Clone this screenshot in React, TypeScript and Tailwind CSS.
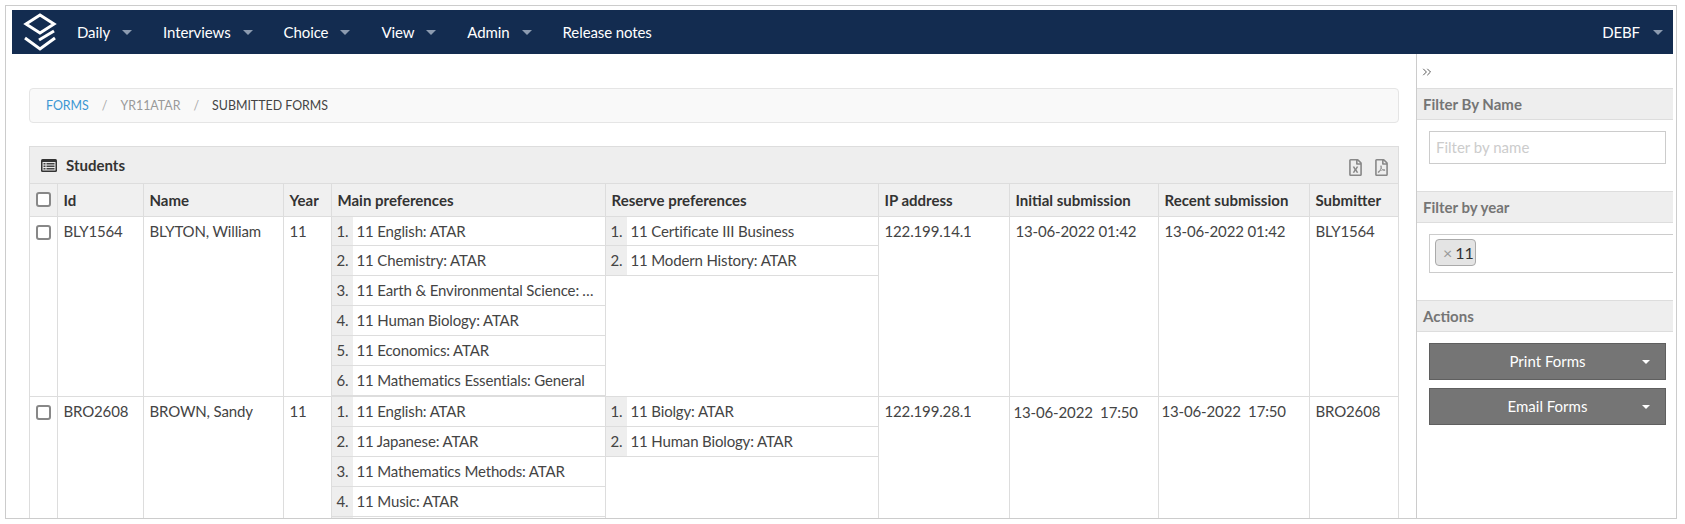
import { FaRegFileExcel, FaRegFilePdf } from "react-icons/fa";
import { ChevronsRight } from "lucide-react";

const navItems = [
  { label: "Daily", caret: true },
  { label: "Interviews", caret: true },
  { label: "Choice", caret: true },
  { label: "View", caret: true },
  { label: "Admin", caret: true },
  { label: "Release notes", caret: false },
];

function Caret() {
  return <span className="inline-block w-0 h-0 border-x-[5px] border-x-transparent border-t-[5px] border-t-[#8c9bb0]" />;
}

function Logo() {
  return (
    <svg width="34" height="38" viewBox="0 0 34 38" fill="none" stroke="white" strokeWidth="3">
      <path d="M17 2 L31 11 L17 20 L3 11 Z" />
      <path d="M2 25 L17 36 L32 25" />
      <path d="M16 27 L31 18" />
    </svg>
  );
}

function ListIcon() {
  return (
    <svg width="16" height="13" viewBox="0 0 16 13">
      <rect x="0" y="0" width="16" height="13" rx="1.5" fill="#333333" />
      <rect x="1.5" y="3" width="13" height="8.5" fill="#e8e8e8" />
      <rect x="2.5" y="4" width="2" height="1.5" fill="#444444" />
      <rect x="5.5" y="4" width="8" height="1.5" fill="#444444" />
      <rect x="2.5" y="6.5" width="2" height="1.5" fill="#444444" />
      <rect x="5.5" y="6.5" width="8" height="1.5" fill="#444444" />
      <rect x="2.5" y="9" width="2" height="1.5" fill="#444444" />
      <rect x="5.5" y="9" width="8" height="1.5" fill="#444444" />
    </svg>
  );
}

function Check() {
  return <span className="block w-[15px] h-[15px] border-2 border-[#888888] rounded-[3px] bg-white" />;
}

function PrefList({ items, shortFirst }: { items: string[]; shortFirst?: boolean }) {
  return (
    <div className="w-full">
      {items.map((t, i) => (
        <div key={i} className={i === 0 && shortFirst ? "flex h-[29px] border-b border-[#ddd]" : "flex h-[30px] border-b border-[#ddd]"}>
          <div className="w-[21px] shrink-0 bg-[#eeeeee] pl-[5px] leading-[28px]">{i + 1}.</div>
          <div className="flex-1 pl-[4px] pr-[8px] leading-[28px] truncate min-w-0">{t}</div>
        </div>
      ))}
    </div>
  );
}

function Th({ children }: { children?: React.ReactNode }) {
  return <th className="border-r border-[#ddd] last:border-r-0 px-[6px] text-left font-bold text-[#333] align-middle">{children}</th>;
}

const tdClass = "border-r border-[#ddd] last:border-r-0 px-[6px] pt-[3px] align-top";

function SideHead({ children }: { children: React.ReactNode }) {
  return (
    <div className="h-[32px] bg-[#eeeeee] border-y border-[#dddddd] pl-[6px] font-bold text-[#757575] leading-[30px]">
      {children}
    </div>
  );
}

function ActionButton({ label }: { label: string }) {
  return (
    <button className="relative w-[237px] h-[37px] bg-[#757575] border border-[#5f5f5f] text-white text-center">
      {label}
      <span className="absolute right-[15px] top-[16px] w-0 h-0 border-x-[4px] border-x-transparent border-t-[4px] border-t-white" />
    </button>
  );
}

export default function App() {
  return (
    <div className="h-[524px] w-full bg-white pl-[5px] pt-[5px] overflow-hidden font-['Lato',sans-serif] text-[15px] text-[#444]">
      <div className="w-[1672px] h-[514px] border border-[#cccccc] pl-[6px] pr-[3px] pt-[4px] flex flex-col overflow-hidden">
        <nav className="h-[44px] shrink-0 bg-[#132c50] flex items-center text-white text-[15px] tracking-[-0.1px]">
          <div className="w-[65px] pl-[11px] flex items-center">
            <Logo />
          </div>
          <div className="flex items-center gap-[31px]">
            {navItems.map((n) => (
              <div key={n.label} className="flex items-center gap-[12px]">
                <span>{n.label}</span>
                {n.caret && <Caret />}
              </div>
            ))}
          </div>
          <div className="ml-auto flex items-center gap-[13px] pr-[10px]">
            <span>DEBF</span>
            <Caret />
          </div>
        </nav>

        <div className="flex-1 flex min-h-0">
          <main className="flex-1 min-w-0 pl-[17px] pr-[17px] pt-[34px] overflow-hidden">
            <div className="h-[35px] bg-[#f9f9f9] border border-[#e5e5e5] rounded-[4px] flex items-center pl-[16px] pt-[2px] text-[12.4px] uppercase">
              <span className="text-[#3b97d3]">Forms</span>
              <span className="text-[#aaa] px-[13px]">/</span>
              <span className="text-[#999]">YR11ATAR</span>
              <span className="text-[#aaa] px-[13px]">/</span>
              <span className="text-[#444]">Submitted Forms</span>
            </div>

            <section className="mt-[23px] border-x border-t border-[#dddddd]">
              <div className="h-[37px] bg-[#eeeeee] border-b border-[#dddddd] flex items-center pl-[11px] pr-[8px]">
                <ListIcon />
                <span className="ml-[9px] font-bold text-[#333]">Students</span>
                <div className="ml-auto flex items-center gap-[9px] text-[#888888] text-[17px] pt-[4px]">
                  <FaRegFileExcel />
                  <FaRegFilePdf />
                </div>
              </div>
              <table className="table-fixed w-full border-collapse">
                <colgroup>
                  <col className="w-[27px]" />
                  <col className="w-[86px]" />
                  <col className="w-[140px]" />
                  <col className="w-[48px]" />
                  <col className="w-[274px]" />
                  <col className="w-[273px]" />
                  <col className="w-[131px]" />
                  <col className="w-[149px]" />
                  <col className="w-[151px]" />
                  <col />
                </colgroup>
                <thead>
                  <tr className="h-[32px] bg-[#f0f0f0] border-b border-[#dddddd]">
                    <th className="border-r border-[#ddd] pl-[6px]"><Check /></th>
                    <Th>Id</Th>
                    <Th>Name</Th>
                    <Th>Year</Th>
                    <Th>Main preferences</Th>
                    <Th>Reserve preferences</Th>
                    <Th>IP address</Th>
                    <Th>Initial submission</Th>
                    <Th>Recent submission</Th>
                    <Th>Submitter</Th>
                  </tr>
                </thead>
                <tbody className="tracking-[-0.15px]">
                  <tr className="border-b border-[#dddddd]">
                    <td className="border-r border-[#ddd] pl-[6px] pt-[8px] align-top"><Check /></td>
                    <td className={tdClass}>BLY1564</td>
                    <td className={tdClass}>BLYTON, William</td>
                    <td className={tdClass}>11</td>
                    <td className="border-r border-[#ddd] align-top p-0">
                      <PrefList shortFirst items={["11 English: ATAR", "11 Chemistry: ATAR", "11 Earth & Environmental Science: ATAR", "11 Human Biology: ATAR", "11 Economics: ATAR", "11 Mathematics Essentials: General"]} />
                    </td>
                    <td className="border-r border-[#ddd] align-top p-0">
                      <PrefList shortFirst items={["11 Certificate III Business", "11 Modern History: ATAR"]} />
                    </td>
                    <td className={tdClass}><div className="overflow-hidden whitespace-nowrap w-[86px]">122.199.14.1</div></td>
                    <td className={tdClass}>13-06-2022 01:42</td>
                    <td className={tdClass}>13-06-2022 01:42</td>
                    <td className={tdClass}>BLY1564</td>
                  </tr>
                  <tr>
                    <td className="border-r border-[#ddd] pl-[6px] pt-[8px] align-top"><Check /></td>
                    <td className={tdClass}>BRO2608</td>
                    <td className={tdClass}>BROWN, Sandy</td>
                    <td className={tdClass}>11</td>
                    <td className="border-r border-[#ddd] align-top p-0">
                      <PrefList items={["11 English: ATAR", "11 Japanese: ATAR", "11 Mathematics Methods: ATAR", "11 Music: ATAR", "\u00a0"]} />
                    </td>
                    <td className="border-r border-[#ddd] align-top p-0">
                      <PrefList items={["11 Biolgy: ATAR", "11 Human Biology: ATAR"]} />
                    </td>
                    <td className={tdClass}><div className="overflow-hidden whitespace-nowrap w-[86px]">122.199.28.144</div></td>
                    <td className={tdClass}><span className="block -ml-[2px] mt-[1px] whitespace-pre">13-06-2022  17:50</span></td>
                    <td className={tdClass}><span className="relative block -ml-[3px] bg-white whitespace-pre">13-06-2022  17:50</span></td>
                    <td className={tdClass}>BRO2608</td>
                  </tr>
                </tbody>
              </table>
            </section>
          </main>

          <aside className="w-[257px] shrink-0 border-l border-[#cccccc] overflow-hidden">
            <div className="h-[34px] pl-[3px] pt-[2px] flex items-center text-[#444]">
              <ChevronsRight size={14} strokeWidth={1.5} />
            </div>
            <SideHead>Filter By Name</SideHead>
            <div className="h-[71px] pl-[12px] pt-[11px]">
              <input className="w-[237px] h-[33px] border border-[#cccccc] px-[6px] pb-[2px] outline-none placeholder:text-[#cccccc]" placeholder="Filter by name" />
            </div>
            <SideHead>Filter by year</SideHead>
            <div className="h-[77px] pl-[12px] pt-[11px]">
              <div className="h-[39px] w-[260px] border border-[#cccccc] pl-[5px] pt-[4px]">
                <span className="inline-flex items-center h-[27px] w-[41px] bg-[#e4e4e4] border border-[#aaaaaa] rounded-[4px] pl-[7px] text-[#333] text-[16px]">
                  <span className="text-[#999] text-[16px] mr-[3px]">×</span>11
                </span>
              </div>
            </div>
            <SideHead>Actions</SideHead>
            <div className="pl-[12px] pt-[11px] flex flex-col gap-[8px]">
              <ActionButton label="Print Forms" />
              <ActionButton label="Email Forms" />
            </div>
          </aside>
        </div>
      </div>
    </div>
  );
}
